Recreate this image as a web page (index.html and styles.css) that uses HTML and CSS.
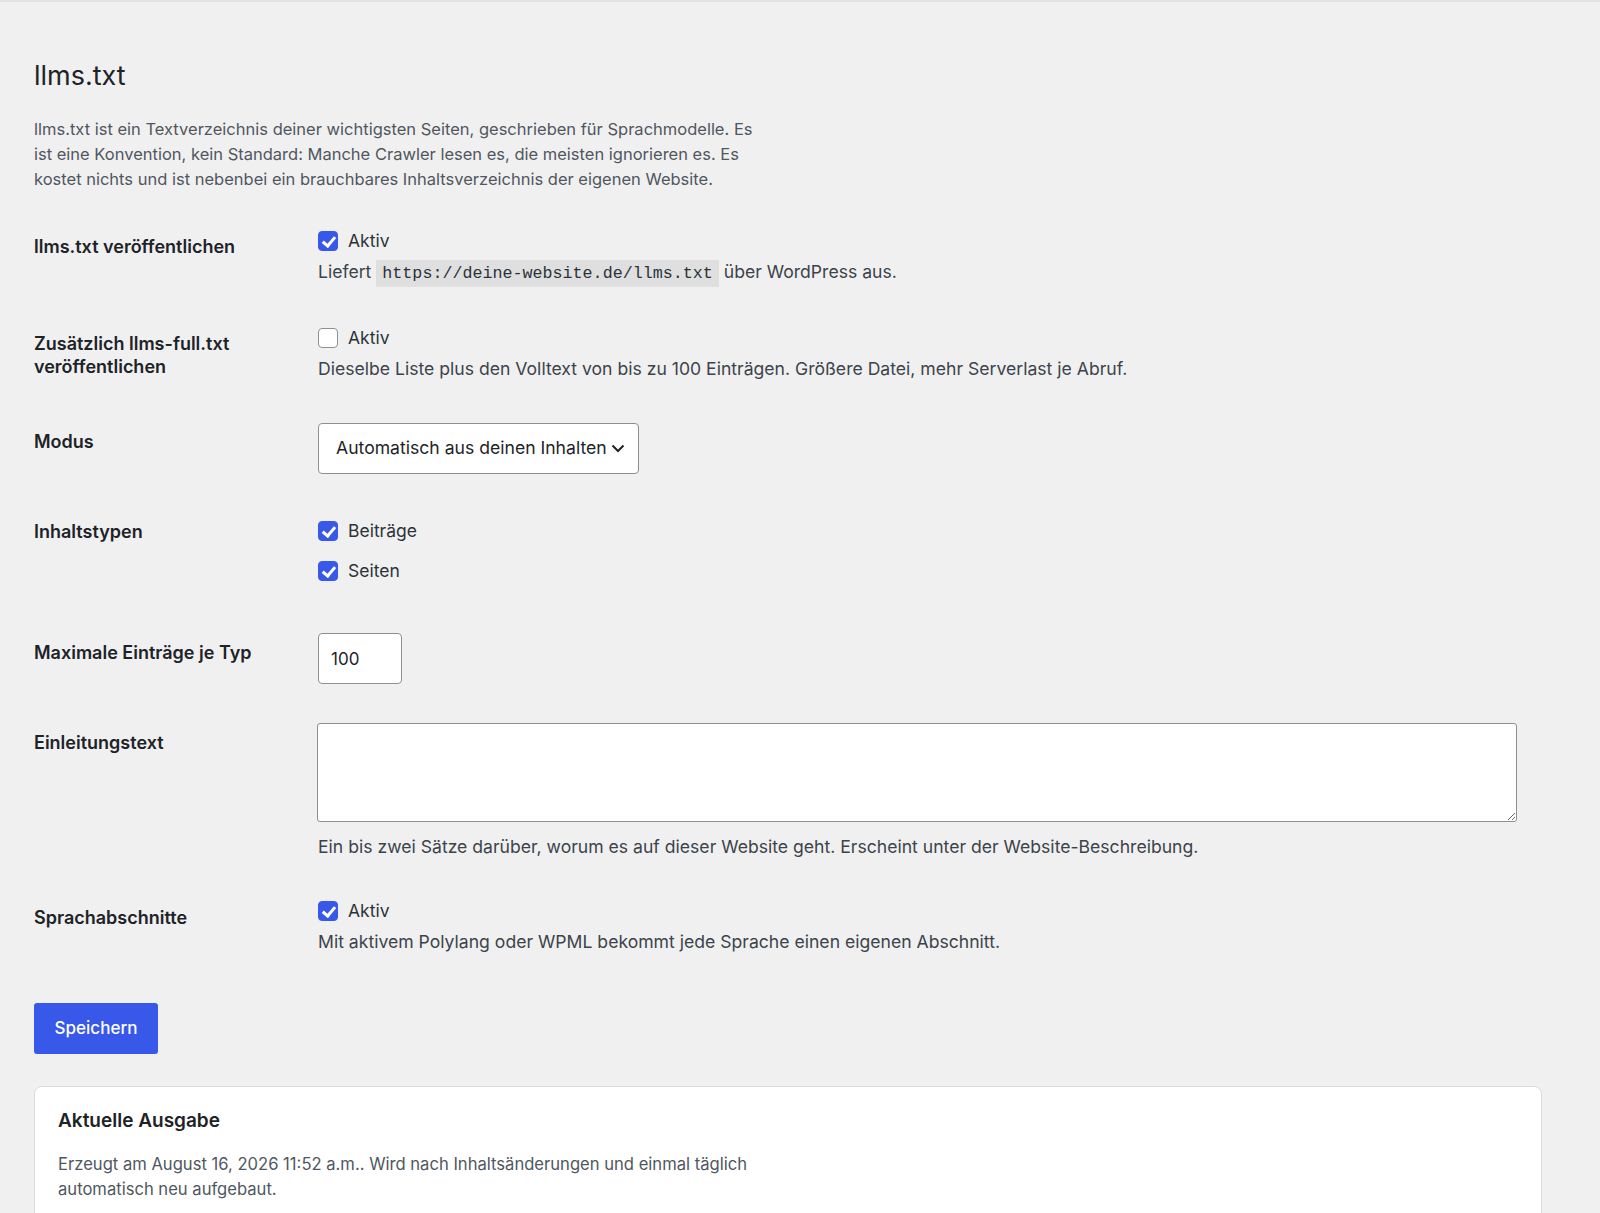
FILE: index.html
```html
<!DOCTYPE html>
<html lang="de">
<head>
    <meta charset="UTF-8">
    <meta name="viewport" content="width=device-width, initial-scale=1.0">
    <title>llms.txt Einstellungen</title>
    <link rel="stylesheet" href="styles.css">
</head>
<body>
    <div class="wrap">
        <h1>llms.txt</h1>
        <p class="intro">llms.txt ist ein Textverzeichnis deiner wichtigsten Seiten, geschrieben für Sprachmodelle. Es ist eine Konvention, kein Standard: Manche Crawler lesen es, die meisten ignorieren es. Es kostet nichts und ist nebenbei ein brauchbares Inhaltsverzeichnis der eigenen Website.</p>

        <form class="settings">
            <table class="form-table">
                <tr>
                    <th>llms.txt veröffentlichen</th>
                    <td>
                        <label class="check"><input type="checkbox" checked> Aktiv</label>
                        <p class="description">Liefert <code>https://deine-website.de/llms.txt</code> über WordPress aus.</p>
                    </td>
                </tr>
                <tr>
                    <th>Zusätzlich llms-full.txt veröffentlichen</th>
                    <td>
                        <label class="check"><input type="checkbox"> Aktiv</label>
                        <p class="description">Dieselbe Liste plus den Volltext von bis zu 100 Einträgen. Größere Datei, mehr Serverlast je Abruf.</p>
                    </td>
                </tr>
                <tr>
                    <th>Modus</th>
                    <td>
                        <div class="select">
                            <span>Automatisch aus deinen Inhalten</span>
                            <svg width="16" height="16" viewBox="0 0 16 16"><path d="M2.5 5.5l5.5 5.5 5.5-5.5" fill="none" stroke="#1d2327" stroke-width="2"/></svg>
                        </div>
                    </td>
                </tr>
                <tr>
                    <th>Inhaltstypen</th>
                    <td>
                        <div class="check-list">
                            <label class="check"><input type="checkbox" checked> Beiträge</label>
                            <label class="check"><input type="checkbox" checked> Seiten</label>
                        </div>
                    </td>
                </tr>
                <tr>
                    <th>Maximale Einträge je Typ</th>
                    <td><input class="num" type="text" value="100"></td>
                </tr>
                <tr>
                    <th>Einleitungstext</th>
                    <td>
                        <textarea class="intro-text"></textarea>
                        <p class="description">Ein bis zwei Sätze darüber, worum es auf dieser Website geht. Erscheint unter der Website-Beschreibung.</p>
                    </td>
                </tr>
                <tr>
                    <th>Sprachabschnitte</th>
                    <td>
                        <label class="check"><input type="checkbox" checked> Aktiv</label>
                        <p class="description">Mit aktivem Polylang oder WPML bekommt jede Sprache einen eigenen Abschnitt.</p>
                    </td>
                </tr>
            </table>

            <button type="button" class="button-primary">Speichern</button>
        </form>

        <div class="card">
            <h2>Aktuelle Ausgabe</h2>
            <p>Erzeugt am August 16, 2026 11:52 a.m.. Wird nach Inhaltsänderungen und einmal täglich automatisch neu aufgebaut.</p>
        </div>
    </div>
</body>
</html>
```

FILE: styles.css
```css
body { margin: 0; background: #f0f0f1; color: #1d2327; font-family: Inter, "Noto Sans", sans-serif; font-size: 17px; border-top: 2px solid #e3e3e5; }
.wrap { padding: 54px 58px 0 34px; }

h1 { margin: 0; font-size: 27px; font-weight: 400; line-height: 39px; color: #1d2327; }
.intro { margin: 22px 0 0; max-width: 735px; font-size: 16.5px; line-height: 25px; color: #50575e; }

/* settings table */
.form-table { border-collapse: collapse; margin-top: 16px; width: 100%; }
.form-table th { width: 258px; padding: 27px 26px 25px 0; text-align: left; vertical-align: top; font-size: 18px; font-weight: 600; line-height: 23px; }
.form-table td { padding: 19.5px 0; vertical-align: top; line-height: 26px; }
.description { margin: 5px 0 0; font-size: 17.6px; line-height: 25px; color: #3c434a; }
code { font-family: "Liberation Mono", monospace; font-size: 16.7px; background: #dfdfe0; padding: 4px 6px; color: #2c3338; }

.check { display: flex; align-items: center; gap: 10px; font-size: 17.5px; color: #2c3338; }
.check input { appearance: none; margin: 0; width: 20px; height: 20px; border: 1px solid #8c8f94; border-radius: 4px; background: #fff; position: relative; }
.check input:checked { background: #3858e9; border-color: #3858e9; }
.check input:checked::before { content: ""; position: absolute; left: 6px; top: 2px; width: 5px; height: 10px; border: solid #fff; border-width: 0 3px 3px 0; transform: rotate(40deg); }
.check-list { display: flex; flex-direction: column; gap: 14.5px; padding: 5px 0 10px; }

.select { display: flex; align-items: center; justify-content: space-between; box-sizing: border-box; width: 321px; height: 51px; padding: 0 12px 0 17px; background: #fff; border: 1px solid #8c8f94; border-radius: 4px; font-size: 17.6px; color: #1d2327; }
.num { box-sizing: border-box; width: 84px; height: 51px; padding: 0 12px; border: 1px solid #8c8f94; border-radius: 4px; font: inherit; color: #1d2327; display: block; }
.intro-text { box-sizing: border-box; display: block; width: 1200px; height: 99px; border: 1px solid #8c8f94; border-radius: 3px; background: #fff; font: inherit; margin-left: -1px; }
.intro-text + .description { margin-top: 12px; }

.button-primary { margin-top: 29px; width: 124px; height: 51px; border: 0; border-radius: 3px; background: #3858e9; color: #fff; font: inherit; font-weight: 500; }

.card { margin-top: 32px; background: #fff; border: 1px solid #dcdcde; border-radius: 8px; padding: 21px 23px 30px; }
.card h2 { margin: 0; font-size: 19px; font-weight: 600; line-height: 26px; color: #1d2327; }
.card p { margin: 18px 0 0; max-width: 735px; font-size: 16.6px; line-height: 25px; color: #50575e; }
```
